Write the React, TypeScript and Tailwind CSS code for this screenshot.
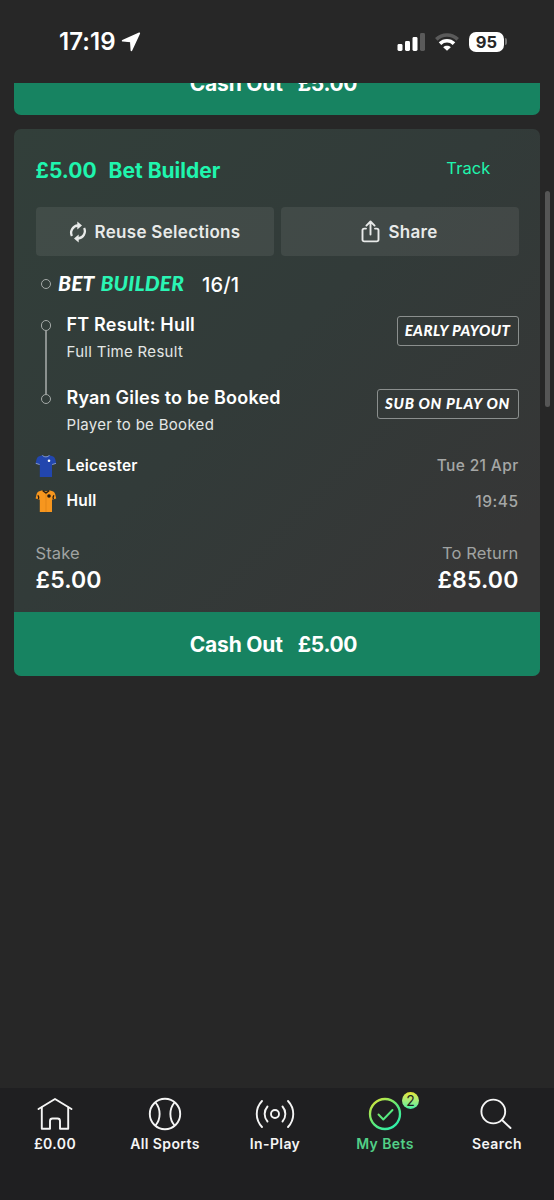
import type { ReactNode } from "react";

interface Leg {
  title: string;
  market: string;
  badge: string;
  badgeClass: string;
}

const legs: Leg[] = [
  {
    title: "FT Result: Hull",
    market: "Full Time Result",
    badge: "EARLY PAYOUT",
    badgeClass: "w-[122px] tracking-[0.42px]",
  },
  {
    title: "Ryan Giles to be Booked",
    market: "Player to be Booked",
    badge: "SUB ON PLAY ON",
    badgeClass: "w-[142px] tracking-[0.72px]",
  },
];

const SHIRT_PATH =
  "M7.400 1.200 4.200 2.300C2.600 2.900 1.900 3.900 1.500 5.600L.600 9.600l4 1.100.200-.7V23h12.200V10l.200.7 4-1.100-.900-4c-.4-1.700-1.100-2.700-2.700-3.300L14.400 1.200c-1.200 1.400-5.800 1.400-7 0z";

function StatusBar() {
  return (
    <header className="relative z-10 flex h-[83px] shrink-0 items-start justify-between bg-[#272727] pl-[59px] pr-[47px] text-white">
      <div className="flex h-[83px] items-center gap-[4px]">
        <span className="w-[58px] text-[24px] font-semibold leading-7 tracking-[0.1px]">
          17:19
        </span>
        <svg width="20" height="20" viewBox="0 0 20 20" fill="currentColor">
          <path
            d="M18.300 1.300 1.600 8.800l8.200.7.600 8.900z"
            stroke="currentColor"
            strokeWidth="1.600"
            strokeLinejoin="round"
          />
        </svg>
      </div>
      <div className="flex h-[83px] items-center">
        <svg width="29" height="20" viewBox="0 0 29 20" fill="currentColor">
          <rect x="0.500" y="12" width="5" height="7" rx="1.400" />
          <rect x="8" y="9" width="5" height="10" rx="1.400" />
          <rect x="15.500" y="5" width="5" height="14" rx="1.400" />
          <rect x="23" y="1" width="5" height="18" rx="1.400" fill="#5a5a5a" />
        </svg>
        <svg
          className="ml-[8px]"
          width="26"
          height="20"
          viewBox="0 0 26 20"
          fill="none"
          strokeWidth="3.600"
        >
          <path d="M2.300 7.400C8.200 1.600 17.800 1.600 23.700 7.400" stroke="#5a5a5a" />
          <path d="M6 11.600c4-3.900 10-3.900 14 0" stroke="currentColor" />
          <path
            d="M13 18.800l-3.800-3.600c2.200-1.900 5.400-1.900 7.600 0z"
            fill="currentColor"
          />
        </svg>
        <span className="ml-[9px] flex h-5 w-[35px] items-center justify-center rounded-[7px] bg-white text-[16.500px] font-bold leading-5 text-[#272727]">
          95
        </span>
        <span className="ml-[1px] h-[7px] w-[2px] rounded-r-full bg-[#777]" />
      </div>
    </header>
  );
}

function CashOut({ className = "" }: { className?: string }) {
  return (
    <button
      className={`flex h-[63.5px] w-full items-center justify-center gap-[15px] rounded-b-[7px] bg-[#178361] pr-[7px] pt-px text-[21px] font-bold tracking-[-0.2px] text-white ${className}`}
    >
      <span>Cash Out</span>
      <span className="tracking-[-0.3px]">£5.00</span>
    </button>
  );
}

function ActionButton({ icon, label }: { icon: ReactNode; label: string }) {
  return (
    <button className="flex flex-1 items-center justify-center gap-2 rounded-[4px] bg-white/[0.075] text-[17px] font-semibold tracking-[0.3px] text-[#e8eae9]">
      {icon}
      <span className="mt-[2px]">{label}</span>
    </button>
  );
}

function ReuseIcon() {
  return (
    <svg width="18" height="22" viewBox="0 0 18 22" fill="none">
      <path
        d="M2.900 15A7.300 7.300 0 0 1 9 4.500M15.100 7A7.300 7.300 0 0 1 9 17.500"
        stroke="currentColor"
        strokeWidth="2.300"
      />
      <path
        d="M8.300.500 13 4.500 8.300 8.500zM9.700 13.500 5 17.500 9.700 21.500z"
        fill="currentColor"
      />
    </svg>
  );
}

function ShareIcon() {
  return (
    <svg
      width="19"
      height="23"
      viewBox="0 0 19 23"
      fill="none"
      stroke="currentColor"
      strokeWidth="1.900"
      strokeLinecap="round"
      strokeLinejoin="round"
    >
      <path d="M5 8.600H3.200A1.700 1.700 0 0 0 1.500 10.300v9.400a1.700 1.700 0 0 0 1.700 1.700h12.600a1.700 1.700 0 0 0 1.700-1.700v-9.400a1.700 1.700 0 0 0-1.700-1.700H14" />
      <path d="M9.500 14.500V1.800M5.400 5.600l4.100-4.100 4.100 4.100" />
    </svg>
  );
}

function Node() {
  return (
    <span className="block size-[10.500px] shrink-0 rounded-full border-[1.500px] border-[#a5aaa8]" />
  );
}

function BlueShirt() {
  return (
    <svg width="22" height="24" viewBox="0 0 22 24" className="-ml-[0.500px]">
      <path d={SHIRT_PATH} fill="#2246ae" />
      <path
        d="M7.400 1.200c1.200 2.200 5.800 2.200 7 0M.800 9.400l3.900 1.100M21 9.400l-3.900 1.100"
        stroke="#8fa0c8"
        strokeWidth="0.900"
        fill="none"
      />
      <circle cx="14" cy="6.800" r="1.300" fill="#fff" />
    </svg>
  );
}

function AmberShirt() {
  return (
    <svg width="22" height="24" viewBox="0 0 22 24" className="-ml-[0.500px]">
      <path d={SHIRT_PATH} fill="#f7961e" />
      <path
        d="M7.600 1.400 11 4.200l3.300-2.800M2.800 6.200c1.200 1.200 1.200 2.200.600 4M19 6.200c-1.200 1.200-1.200 2.200-.6 4"
        stroke="#2b1e12"
        strokeWidth="1.300"
        fill="none"
      />
      <path d="M11 4.500V23" stroke="#d97e12" strokeWidth="0.600" />
      <circle cx="14" cy="7" r="1.800" fill="#221a14" />
    </svg>
  );
}

function LegRow({ leg }: { leg: Leg }) {
  return (
    <div className="flex h-[73px] items-start justify-between pl-[31px]">
      <div className="pt-px">
        <div className="text-[18px] font-semibold leading-6 tracking-[0.2px]">
          {leg.title}
        </div>
        <div className="mt-[3px] text-[15px] leading-6 tracking-[0.3px] text-[#e4e7e6]">
          {leg.market}
        </div>
      </div>
      <div
        className={`mt-[4px] flex h-[30px] items-center justify-center rounded-[3px] border-[1.500px] border-[#8b8f8e] pb-px font-[Lato,sans-serif] text-[15px] font-black italic ${leg.badgeClass}`}
      >
        {leg.badge}
      </div>
    </div>
  );
}

function BetCard() {
  return (
    <section className="mt-[14px] rounded-[7px] bg-linear-[135deg,#323f3a_0%,#323b39_45%,#363636_85%]">
      <div className="h-[483px] px-[21.500px]">
        <div className="flex h-[78px] items-center justify-between pr-7 text-[#1ff5ae]">
          <h2 className="mt-[5px] flex gap-[12px] text-[21px] font-bold">
            <span>£5.00</span>
            <span>Bet Builder</span>
          </h2>
          <a className="mt-px text-[16.500px] tracking-[0.1px]">Track</a>
        </div>

        <div className="flex h-[49px] gap-[7px]">
          <ActionButton icon={<ReuseIcon />} label="Reuse Selections" />
          <ActionButton icon={<ShareIcon />} label="Share" />
        </div>

        <div className="flex h-[56px] items-center pl-[5px]">
          <Node />
          <span className="-mt-[2px] ml-[7px] flex gap-[6px] font-[Lato,sans-serif] text-[21px] font-black italic tracking-[0.13px]">
            <span>BET</span>
            <span className="text-[#2af5b4]">BUILDER</span>
          </span>
          <span className="ml-[18px] mt-px text-[20px] font-medium tracking-[0.1px]">
            16/1
          </span>
        </div>

        {/* Selections, joined by the line on the left */}
        <div className="relative h-[136px]">
          <div className="absolute left-[5px] top-2 flex flex-col items-center">
            <Node />
            <span className="h-[63px] w-[1.500px] bg-[#8b918f]" />
            <Node />
          </div>
          {legs.map((leg) => (
            <LegRow key={leg.title} leg={leg} />
          ))}
        </div>

        {/* Fixture */}
        <div className="flex h-[35px] items-center text-[15.500px] font-semibold tracking-[0.2px]">
          <BlueShirt />
          <span className="ml-[9.500px]">Leicester</span>
          <span className="ml-auto mt-px font-medium tracking-[0.35px] text-[#a5a7a6]">
            Tue 21 Apr
          </span>
        </div>
        <div className="flex h-[35px] items-center text-[15.500px] font-semibold tracking-[0.2px]">
          <AmberShirt />
          <span className="ml-[9.500px]">Hull</span>
          <span className="ml-auto mt-[2px] font-medium tracking-[0.500px] text-[#a5a7a6]">
            19:45
          </span>
        </div>

        <div className="mt-[23px] flex justify-between">
          <div>
            <div className="text-[16.500px] leading-6 tracking-[0.15px] text-[#a0a3a2]">
              Stake
            </div>
            <div className="text-[23px] font-semibold leading-[30px] tracking-[0.15px]">
              £5.00
            </div>
          </div>
          <div className="text-right">
            <div className="text-[16.500px] leading-6 tracking-[0.15px] text-[#a0a3a2]">
              To Return
            </div>
            <div className="text-[23px] font-semibold leading-[30px] tracking-[0.15px]">
              £85.00
            </div>
          </div>
        </div>
      </div>
      <CashOut />
    </section>
  );
}

function NavItem({
  label,
  active,
  children,
}: {
  label: string;
  active?: boolean;
  children: ReactNode;
}) {
  return (
    <a
      className={`flex flex-col items-center pt-[8px] text-[14px] font-semibold tracking-[0.4px] ${
        active ? "text-[#52cf87]" : "text-[#f5f5f5]"
      }`}
    >
      <span className="relative block h-[36px] w-[36px]">{children}</span>
      <span className="mt-[2px] whitespace-nowrap leading-5">{label}</span>
    </a>
  );
}

function BottomNav() {
  const stroke = {
    width: 36,
    height: 36,
    viewBox: "0 0 36 36",
    fill: "none",
    stroke: "currentColor",
    strokeWidth: 1.9,
    strokeLinecap: "round",
    strokeLinejoin: "round",
  } as const;

  return (
    <nav className="mt-auto grid h-[112px] shrink-0 grid-cols-[repeat(4,110px)_114px] bg-[#1f1f21]">
      <NavItem label="£0.00">
        <svg {...stroke}>
          <path d="M1.500 13 18 3l16.500 10" />
          <path d="M4.800 11.500v21.200h8.200V25a2.500 2.500 0 0 1 2.500-2.500h5A2.500 2.500 0 0 1 23 25v7.700h8.200V11.500" />
        </svg>
      </NavItem>
      <NavItem label="All Sports">
        <svg {...stroke}>
          <circle cx="18" cy="18" r="15.200" />
          <path d="M8.500 6.500c5.500 6.500 5.500 16.500 0 23M27.500 6.500c-5.500 6.500-5.500 16.500 0 23" />
        </svg>
      </NavItem>
      <NavItem label="In-Play">
        <svg {...stroke} width="42" className="-ml-[3px] max-w-none" viewBox="-3 0 42 36">
          <circle cx="18" cy="18" r="4" />
          <path d="M10.500 10.500c-3.800 4.300-3.800 10.700 0 15M25.500 10.500c3.800 4.300 3.800 10.700 0 15M5 5c-7 7.500-7 18.500 0 26M31 5c7 7.500 7 18.500 0 26" />
        </svg>
      </NavItem>
      <NavItem label="My Bets" active>
        <svg {...stroke} stroke="url(#bets)">
          <defs>
            <linearGradient
              id="bets"
              gradientUnits="userSpaceOnUse"
              x1="6"
              y1="4"
              x2="28"
              y2="32"
            >
              <stop offset="0" stopColor="#d6e63c" />
              <stop offset="0.500" stopColor="#5fe977" />
              <stop offset="1" stopColor="#2cf0ae" />
            </linearGradient>
          </defs>
          <circle cx="18" cy="18" r="15" strokeWidth="2.300" />
          <path d="m11.500 18.500 4.800 5L25.500 14" />
        </svg>
        <span className="absolute -right-[16px] -top-[4px] flex size-[17px] items-center justify-center rounded-full bg-linear-to-b from-[#e3e62e] to-[#36f0a4] text-[14px] font-normal leading-none tracking-normal text-[#1f1f21]">
          2
        </span>
      </NavItem>
      <NavItem label="Search">
        <svg {...stroke}>
          <circle cx="14.300" cy="15.500" r="11.900" />
          <path d="m23 24 8.500 8" />
        </svg>
      </NavItem>
    </nav>
  );
}

export default function App() {
  return (
    <div className="relative flex h-[1200px] w-[554px] flex-col overflow-hidden bg-[#272727] font-[Inter,sans-serif] text-white">
      <StatusBar />
      <main className="px-[14px]">
        {/* Previous bet, scrolled under the status bar */}
        <CashOut className="-mt-[31.500px]" />
        <BetCard />
      </main>
      <div className="absolute right-[4px] top-[191px] h-[216px] w-[5px] rounded-full bg-[#565656]" />
      <BottomNav />
    </div>
  );
}
